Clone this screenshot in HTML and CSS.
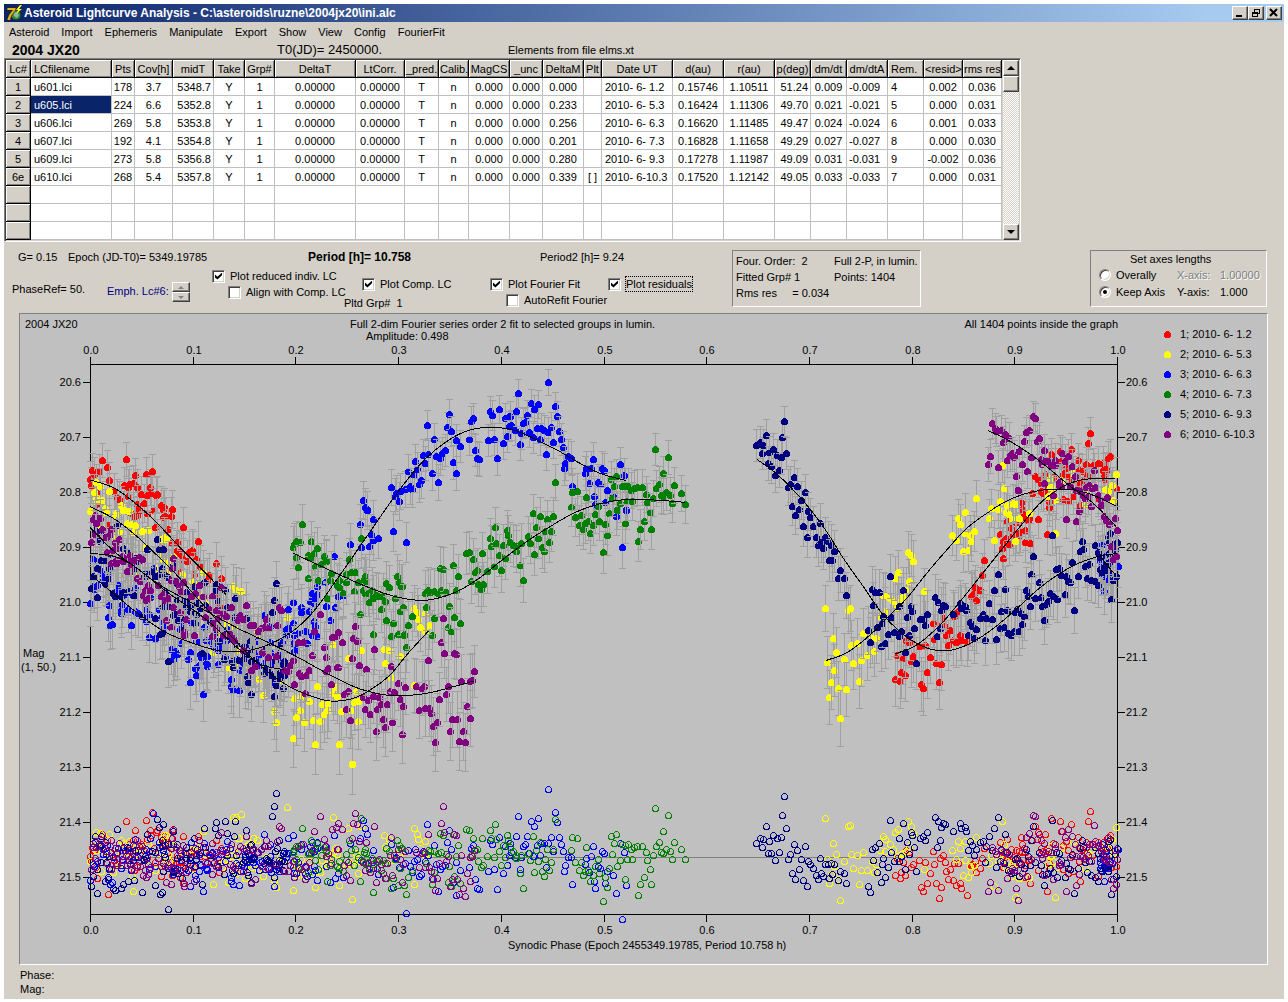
FILE: index.html
```html
<!DOCTYPE html>
<html lang="en">
<head>
    <meta charset="UTF-8">
    <meta name="viewport" content="width=device-width, initial-scale=1.0">
    <title>Asteroid Lightcurve Analysis</title>
    <link rel="stylesheet" href="styles.css">
</head>
<body>

    <div class="window">
        <!-- Title bar -->
        <header class="title-bar">
            <svg class="app-icon" width="17" height="17" viewBox="0 0 17 17">
                <circle cx="10" cy="10" r="5" fill="#2f8f3c" stroke="#222" />
                <path d="M8 8l3-1 2 3-2 3-3-2z" fill="#8fb8a0" />
                <path d="M14 0l-4 5h2l-2 4 6-5h-3l3-4z" fill="#ffff00" />
                <text x="0" y="15" class="icon-seven">7</text>
            </svg>
            <h1>Asteroid Lightcurve Analysis - C:\asteroids\ruzne\2004jx20\ini.alc</h1>
            <div class="window-buttons">
                <button aria-label="Minimize"><svg width="12" height="10"><path d="M2 8h6" stroke="#000" stroke-width="2" /></svg></button>
                <button aria-label="Restore"><svg width="12" height="10" shape-rendering="crispEdges"><path d="M4 1h6M4 1.5h6M4.5 1v3M9.500 1v5M7 5.500h3M2 4.500h6M2 5.500h6M2.500 4v5M7.500 4v5M2 8.500h6" stroke="#000" fill="none" /></svg></button>
                <button aria-label="Close" class="close"><svg width="12" height="10"><path d="M2 1l7 7M9 1l-7 7" stroke="#000" stroke-width="2" /></svg></button>
            </div>
        </header>

        <nav class="menu">
            <a href="#">Asteroid</a>
            <a href="#">Import</a>
            <a href="#">Ephemeris</a>
            <a href="#">Manipulate</a>
            <a href="#">Export</a>
            <a href="#">Show</a>
            <a href="#">View</a>
            <a href="#">Config</a>
            <a href="#">FourierFit</a>
        </nav>

        <div class="info-row">
            <strong class="object-name">2004 JX20</strong>
            <span class="t0">T0(JD)= 2450000.</span>
            <span>Elements from file elms.xt</span>
        </div>

        <!-- Lightcurve table -->
        <div class="grid-box">
            <table id="lcTable">
                <colgroup id="lcCols"></colgroup>
                <thead><tr id="lcHead"></tr></thead>
                <tbody id="lcBody"></tbody>
            </table>
            <div class="scrollbar">
                <button aria-label="Scroll up"><svg width="8" height="4"><path d="M0 4l4-4 4 4z" /></svg></button>
                <div class="thumb"></div>
                <button aria-label="Scroll down" class="down"><svg width="8" height="4"><path d="M0 0h8l-4 4z" /></svg></button>
            </div>
        </div>

        <!-- Plot controls -->
        <div class="controls">
            <div class="control-main">
                <div class="values">
                    <span class="g-value">G= 0.15</span>
                    <span class="epoch">Epoch (JD-T0)= 5349.19785</span>
                    <strong class="period">Period [h]= 10.758</strong>
                    <span>Period2 [h]= 9.24</span>
                </div>
                <div class="options">
                    <span class="phase-ref">PhaseRef= 50.</span>
                    <div class="emph">
                        <span>Emph. Lc#6:</span>
                        <div class="spinner">
                            <button aria-label="Next"><svg width="6" height="3"><path d="M0 3l3-3 3 3z" /></svg></button>
                            <button aria-label="Previous"><svg width="6" height="3"><path d="M0 0h6l-3 3z" /></svg></button>
                        </div>
                    </div>
                    <div class="option-col reduced">
                        <label><input type="checkbox" checked> <span>Plot reduced indiv. LC</span></label>
                        <label class="sub"><input type="checkbox"> <span>Align with Comp. LC</span></label>
                    </div>
                    <div class="option-col comp">
                        <label><input type="checkbox" checked> <span>Plot Comp. LC</span></label>
                        <span class="pltd">Pltd Grp#&nbsp; 1</span>
                    </div>
                    <div class="option-col fourier">
                        <label><input type="checkbox" checked> <span>Plot Fourier Fit</span></label>
                        <label class="sub"><input type="checkbox"> <span>AutoRefit Fourier</span></label>
                    </div>
                    <div class="option-col residuals">
                        <label><input type="checkbox" checked> <span class="focused">Plot residuals</span></label>
                    </div>
                </div>
            </div>

            <div class="panel fit-panel">
                <span>Four. Order:&nbsp; 2</span><span>Full 2-P, in lumin.</span>
                <span>Fitted Grp# 1</span><span>Points: 1404</span>
                <span>Rms res &nbsp; &nbsp; = 0.034</span>
            </div>

            <div class="panel axes-panel">
                <p>Set axes lengths</p>
                <label><input type="radio" name="axes"> Overally</label>
                <span class="disabled">X-axis:</span><span class="disabled">1.00000</span>
                <label><input type="radio" name="axes" checked> Keep Axis</label>
                <span>Y-axis:</span><span>1.000</span>
            </div>
        </div>

        <!-- Chart -->
        <div class="chart">
            <svg id="chart" viewBox="20 314 1247 650"></svg>
        </div>

        <footer class="status">
            <div>Phase:</div>
            <div>Mag:</div>
        </footer>
    </div>

    <script src="script.js"></script>
</body>
</html>
```
FILE: styles.css
```css
* {
    box-sizing: border-box;
}

body {
    margin: 0;
    padding: 4px 4px 0;
    background: #fff;
    color: #000;
    font-family: "Liberation Sans", Arial, sans-serif;
    font-size: 11px;
    line-height: 14px;
}

p, h1 {
    margin: 0;
}

button {
    display: flex;
    align-items: center;
    justify-content: center;
    margin: 0;
    padding: 0;
    background: #d4d0c8;
    border: 1px solid;
    border-color: #fff #404040 #404040 #fff;
    box-shadow: inset -1px -1px #808080;
}

.window {
    background: #d4d0c8;
    border-bottom: 1px solid #fff;
    box-shadow: 0 3px #d4d0c8;
}

/* Title bar */
.title-bar {
    display: flex;
    align-items: center;
    height: 18px;
    padding: 0 2px;
    background: linear-gradient(to right, #0a246a, #a6caf0 94%);
}

.icon-seven {
    font: italic bold 16px "Liberation Sans", sans-serif;
    fill: #e0b020;
    stroke: #302000;
    stroke-width: 1px;
    paint-order: stroke;
}

.title-bar h1 {
    margin-left: 1px;
    color: #fff;
    font: bold 12px "Liberation Sans", Arial, sans-serif;
    white-space: nowrap;
}

.window-buttons {
    display: flex;
    margin-left: auto;
}

.window-buttons button {
    width: 16px;
    height: 14px;
}

.window-buttons .close {
    margin-left: 2px;
}

.menu {
    display: flex;
    gap: 12px;
    height: 20px;
    padding: 3px 5px;
}

.menu a {
    color: #000;
    text-decoration: none;
}

.info-row {
    display: flex;
    align-items: center;
    height: 16px;
    padding-left: 8px;
}

.object-name {
    width: 265px;
    font-size: 14px;
}

.t0 {
    width: 231px;
    font-size: 13px;
}

/* Lightcurve table */
.grid-box {
    display: flex;
    width: 1017px;
    border: 1px solid;
    border-color: #808080 #fff #fff #808080;
    box-shadow: inset 1px 1px #404040;
    padding: 1px;
    background: #d4d0c8;
}

table {
    width: 996px;
    table-layout: fixed;
    border-collapse: separate;
    border-spacing: 0;
    background: #fff;
}

th, td {
    height: 18px;
    padding: 1px 1px 0;
    line-height: 15px;
    font-weight: normal;
    text-align: center;
    white-space: nowrap;
    overflow: hidden;
}

td {
    border-right: 1px solid #c0c0c0;
    border-bottom: 1px solid #c0c0c0;
}

th {
    background: #d4d0c8;
    border-right: 1px solid #000;
    border-bottom: 1px solid #000;
    box-shadow: inset 1px 1px #fff, inset -1px -1px #808080;
}

.left {
    padding-left: 3px;
    text-align: left;
}

.right {
    padding-right: 2px;
    text-align: right;
}

.tight {
    padding-left: 2px;
}

.selected {
    background: #0a246a;
    color: #fff;
}

.scrollbar {
    display: flex;
    flex-direction: column;
    width: 16px;
    margin-left: 1px;
    background: repeating-conic-gradient(#fff 0 25%, #d4d0c8 0 50%) 0 0 / 2px 2px;
}

.scrollbar button {
    height: 16px;
}

.thumb {
    height: 16px;
    background: #d4d0c8;
    border: 1px solid;
    border-color: #fff #404040 #404040 #fff;
    box-shadow: inset -1px -1px #808080;
}

.scrollbar .down {
    margin-top: auto;
}

/* Plot controls */
.controls {
    display: flex;
    height: 71px;
    padding: 8px 17px 0 8px;
}

.control-main {
    width: 720px;
}

.values {
    display: flex;
    padding-left: 6px;
}

.g-value {
    width: 50px;
}

.epoch {
    width: 240px;
}

.period {
    width: 232px;
    font-size: 12px;
}

.options {
    display: flex;
    white-space: nowrap;
}

.phase-ref {
    width: 95px;
    padding-top: 18px;
}

.emph {
    display: flex;
    width: 105px;
    padding-top: 18px;
    color: #000080;
}

.emph > span {
    width: 65px;
    padding-top: 2px;
}

.spinner {
    width: 18px;
}

.spinner button {
    width: 100%;
    height: 10px;
    fill: #808080;
}

.option-col label {
    display: flex;
    align-items: center;
    gap: 5px;
    height: 16px;
}

.option-col .sub {
    margin-left: 16px;
}

.reduced {
    width: 150px;
    padding-top: 4px;
}

.comp, .fourier, .residuals {
    padding-top: 12px;
}

.comp {
    width: 128px;
}

.pltd {
    display: block;
    margin: 4px 0 0 -18px;
}

.fourier {
    width: 118px;
}

.focused {
    outline: 1px dotted #000;
}

input {
    appearance: none;
    flex: none;
    width: 13px;
    height: 13px;
    margin: 0;
    background: #fff;
    border: 1px solid;
    border-color: #808080 #fff #fff #808080;
    box-shadow: inset 1px 1px #404040, inset -1px -1px #d4d0c8;
}

input[type="checkbox"]:checked::after {
    content: "";
    display: block;
    width: 7px;
    height: 7px;
    margin: 2px;
    background: #000;
    clip-path: polygon(0 30%, 35% 62%, 100% 0, 100% 40%, 35% 100%, 0 70%);
}

input[type="radio"] {
    width: 12px;
    height: 12px;
    border-radius: 50%;
}

input[type="radio"]:checked::after {
    content: "";
    display: block;
    width: 4px;
    height: 4px;
    margin: 3px;
    border-radius: 50%;
    background: #000;
}

.panel {
    border: 1px solid;
    border-color: #808080 #fff #fff #808080;
    height: 57px;
}

.fit-panel {
    display: grid;
    grid-template-columns: 98px auto;
    grid-auto-rows: 16px;
    width: 189px;
    padding: 3px;
    white-space: nowrap;
}

.axes-panel {
    display: grid;
    grid-template-columns: 78px 43px auto;
    grid-template-rows: 15px 17px 17px;
    align-items: center;
    width: 177px;
    margin-left: auto;
    padding-left: 8px;
    white-space: nowrap;
}

.axes-panel p {
    grid-column: 1 / 4;
    padding-left: 31px;
}

.axes-panel label {
    display: flex;
    align-items: center;
    gap: 5px;
}

.disabled {
    color: #808080;
    text-shadow: 1px 1px #fff;
}

/* Chart */
.chart {
    margin: 0 16px 0 15px;
    background: #c0c0c0;
    border: 1px solid;
    border-color: #808080 #fff #fff #808080;
}

.chart svg {
    display: block;
    width: 100%;
}

.chart text {
    font-family: "Liberation Sans", Arial, sans-serif;
    font-size: 11px;
}

.middle {
    text-anchor: middle;
}

.end {
    text-anchor: end;
}

.axis, .fit {
    fill: none;
    stroke: #000;
}

.zero-line {
    stroke: #808080;
}

.error-bar {
    fill: none;
    stroke: #a0a0a0;
}

.open-dot {
    fill: none;
}

.status {
    height: 34px;
    padding: 3px 16px;
}
```
FILE: script.js
```js
// ---- Lightcurve table ----
const columns = [
    ['Lc#', 25], ['LCfilename', 81, 'left'], ['Pts', 23], ['Cov[h]', 38], ['midT', 41, 'right'],
    ['Take', 31], ['Grp#', 30], ['DeltaT', 81], ['LtCorr.', 49], ['_pred.', 34], ['Calib.', 30],
    ['MagCS', 41], ['_unc', 33], ['DeltaM', 41], ['Plt', 18], ['Date UT', 71, 'left'],
    ['d(au)', 51], ['r(au)', 51], ['p(deg)', 36, 'right'], ['dm/dt', 36], ['dm/dtA', 41, 'left tight'],
    ['Rem.', 36, 'left'], ['<resid>', 39], ['rms res', 39]
];

const rows = [
    '1|u601.lci|178|3.7|5348.7|Y|1|0.00000|0.00000|T|n|0.000|0.000|0.000||2010- 6- 1.2|0.15746|1.10511|51.24|0.009|-0.009|4|0.002|0.036',
    '2|u605.lci|224|6.6|5352.8|Y|1|0.00000|0.00000|T|n|0.000|0.000|0.233||2010- 6- 5.3|0.16424|1.11306|49.70|0.021|-0.021|5|0.000|0.031',
    '3|u606.lci|269|5.8|5353.8|Y|1|0.00000|0.00000|T|n|0.000|0.000|0.256||2010- 6- 6.3|0.16620|1.11485|49.47|0.024|-0.024|6|0.001|0.033',
    '4|u607.lci|192|4.1|5354.8|Y|1|0.00000|0.00000|T|n|0.000|0.000|0.201||2010- 6- 7.3|0.16828|1.11658|49.29|0.027|-0.027|8|0.000|0.030',
    '5|u609.lci|273|5.8|5356.8|Y|1|0.00000|0.00000|T|n|0.000|0.000|0.280||2010- 6- 9.3|0.17278|1.11987|49.09|0.031|-0.031|9|-0.002|0.036',
    '6e|u610.lci|268|5.4|5357.8|Y|1|0.00000|0.00000|T|n|0.000|0.000|0.339|[ ]|2010- 6-10.3|0.17520|1.12142|49.05|0.033|-0.033|7|0.000|0.031',
    '', '', ''
];

const head = document.getElementById('lcHead');
columns.forEach(function (c, i) {
    const col = document.createElement('col');
    col.style.width = c[1] + 'px';
    document.getElementById('lcCols').appendChild(col);
    const th = document.createElement('th');
    th.textContent = c[0];
    if (i === 1 || i === 21) th.className = 'left';
    head.appendChild(th);
});

rows.forEach(function (row, r) {
    const tr = document.createElement('tr');
    const values = row.split('|');
    columns.forEach(function (c, i) {
        const cell = document.createElement(i === 0 ? 'th' : 'td');
        cell.textContent = values[i] || '';
        if (c[2]) cell.className = c[2];
        if (r === 1 && i === 1) cell.classList.add('selected');
        tr.appendChild(cell);
    });
    document.getElementById('lcBody').appendChild(tr);
});

// ---- Chart ----
const LEFT = 90, RIGHT = 1117, TOP = 364, BOTTOM = 914, ZERO = 857;
const chart = document.getElementById('chart');

function el(name, attrs, text) {
    const node = document.createElementNS('http://www.w3.org/2000/svg', name);
    for (const key in attrs) node.setAttribute(key, attrs[key]);
    if (text) node.textContent = text;
    chart.appendChild(node);
    return node;
}

// sessions: samples are stored at 3 units per pixel, from the origin of each part
const A = [80, 360], B = [400, 360], C = [740, 380];
const sessions = [
    { color: '#ff0000', label: '1; 2010- 6- 1.2', parts: [
        { o: A, fit: '31,360 100,383 160,425 215,473 270,530 320,583 370,632 440,705',
          pts: '68,301 82,323 139,298 218,334 200,343 167,346 43,343 30,358 35,375 48,398 88,362 133,376 148,374 160,371 103,395 113,411 145,410 185,403 203,405 232,402 211,382 228,405 193,430 173,434 244,436 249,448 278,448 256,469 155,460 222,451 178,452 117,418 264,507 310,502 275,551 328,577 297,576 290,573 303,583 321,605 360,620 343,642 389,645 381,660 310,665 85,497',
          extra: [31, 440, 26] },
        { o: C, fit: '466,822 530,795 600,735 660,665 720,590 780,515 840,440 900,370 960,325 1010,303 1060,296 1132,297',
          pts: '1051,160 1045,190 995,207 960,215 933,222 963,243 1015,240 1040,253 1060,257 1090,250 1110,230 1105,235 1097,268 1093,290 1075,250 1130,325 1028,275 1018,270 980,265 985,290 1000,350 928,382 895,418 877,340 885,288 895,297 905,310 920,330 915,283 922,463 871,490 839,466 820,465 800,475 790,485 786,505 781,463 855,450 865,420 855,405 848,412 845,367 803,425 830,428 815,445 733,541 727,586 707,622 720,630 703,640 695,650 710,660 697,645 655,695 643,709 611,715 579,731 600,738 615,738 630,750 620,767 625,795 640,780 650,788 660,765 665,782 683,785 584,778 556,796 538,800 500,780 508,787 472,825 490,835 520,829 514,844 570,831 590,850 605,853 562,877 484,877 497,886 466,898 481,904 543,913 550,925 598,907',
          extra: [790, 1130, 26] }
    ] },
    { color: '#ffff00', label: '2; 2010- 6- 5.3', parts: [
        { o: A, fit: '31,440 100,475 160,520 220,575 290,645 370,735 440,813 500,878 560,932 620,975 680,1003 750,1023 820,1015 870,990 930,945 980,885 1050,808',
          pts: '60,378 88,394 48,412 68,422 76,445 125,437 130,450 106,466 30,454 143,489 154,493 118,515 260,538 240,580 250,598 265,608 307,643 460,680 484,694 470,690 623,772 760,853 845,872 805,895 912,868 927,870 917,910 935,952 400,876 495,964 550,1006 583,1054 589,1087 640,1135 706,1154 778,1154 817,1213 648,1072 674,1087 700,1081 720,1084 660,1051 733,1062 742,1052 727,1034 642,1015 665,1008 688,1023 745,1030 760,1001 772,1008 784,1054 815,1050 835,1084 822,1027 836,1025 828,995 1003,975 1003,745 1012,757 1014,777 1022,802 1035,815 1048,797 1035,760 960,890 712,980 767,982 375,730 440,790 560,930 600,960',
          extra: [31, 640, 46] },
        { o: C, fit: '257,842 320,818 390,765 440,715 500,655 560,580 620,510 680,445 740,400 800,363 860,340 920,329 1000,330 1060,346 1132,380',
          pts: '257,685 331,685 325,692 280,775 263,848 283,871 274,907 268,952 295,925 319,928 301,1015 290,817 313,838 340,850 335,795 352,790 370,760 364,841 382,826 358,904 403,815 397,775 408,775 420,710 435,695 430,645 437,650 450,655 460,665 475,577 467,595 505,517 514,527 520,544 509,604 553,634 500,632 490,650 471,683 485,660 638,466 650,482 655,415 660,433 676,397 709,355 703,454 690,465 693,485 670,515 685,510 675,460 749,415 753,385 788,256 793,325 781,364 803,376 820,370 825,372 798,397 808,402 817,417 838,415 775,388 764,481 827,485 946,460 940,340 950,360 935,322 925,350 930,295 1130,283 1117,316 1035,373 1055,320',
          extra: [860, 1130, 8] }
    ] },
    { color: '#0000ff', label: '3; 2010- 6- 6.3', parts: [
        { o: A, fit: '31,643 100,700 180,765 260,818 340,850 420,872 500,872 570,852 640,812 700,755 780,645 860,530 940,415 1010,325 1060,275 1120,232 1170,210 1230,202 1300,210 1360,235 1440,275 1500,310 1560,340 1640,362',
          pts: '30,730 85,772 92,796 98,793 125,751 208,832 287,874 305,850 275,867 280,897 325,897 358,916 382,918 331,967 370,1003 480,932 583,970 220,626 115,677 112,692 135,703 165,755 175,760 640,727 764,590 690,725 706,714 738,740 766,742 752,781 735,667 640,790 655,820 680,815 713,828 683,850 620,825 775,710 790,705 811,553 844,562 867,558 895,535 880,540 873,523 841,493 880,478 862,451 850,421 855,442 940,514 979,547 934,382 957,423 950,400 945,410 960,395 975,388 997,387 990,378 1003,345 985,334 1006,304 1018,373 1023,362 1012,328 1036,310 1030,286 1046,282 1057,340 1042,196 1064,238 1075,367 1070,288 1080,294 1087,280 1096,271 1108,163 1101,202 1114,214 1120,307 1129,340 1129,240 1141,259 1180,175 1174,183 1168,238 1186,271 1191,295 1198,298 1225,241 1230,154 1237,166 1243,238 1252,295 1258,148 1270,250 1281,229 1276,175 1291,168 1309,154 1315,100 1321,253 1342,166 1354,130 1364,148 1376,133 1372,205 1348,217 1330,190 1336,186 1295,195 1287,200 1305,210 1325,220 1360,232 1381,238 1392,210 1385,206 1413,203 1406,216 1426,139 1432,169 1437,214 1444,238 1449,262 1420,247 1399,283 1405,67 1465,290 1473,295 1457,309 1454,325 1477,379 1516,340 1520,325 1533,325 1540,298 1527,370 1543,409 1555,367 1560,373 1566,324 1572,331 1582,392 1577,427 1600,408 1621,313 1633,346 1640,451 1627,562 1609,468 1547,432',
          extra: [31, 720, 105] },
        { o: C, fit: '1080,528 1105,560 1132,590',
          pts: '1135,560 1080,545 1090,530 1100,550 1085,580 1105,600 1097,590 1110,580',
          extra: [1080, 1132, 8] }
    ] },
    { color: '#008000', label: '4; 2010- 6- 7.3', parts: [
        { o: A, fit: '640,580 780,645 860,680 940,708 1020,721 1080,713 1140,690 1200,653 1260,605 1340,545 1410,500 1480,460 1540,437 1600,423 1660,418 1740,421 1816,427',
          pts: '667,493 640,562 661,547 694,545 712,565 648,592 655,622 684,585 694,592 703,580 733,589 740,600 738,605 685,655 715,660 706,620 725,612 750,660 755,640 778,660 773,675 778,683 808,598 800,643 815,636 825,637 743,715 790,700 835,668 858,665 850,690 855,700 865,700 868,727 878,690 880,715 890,705 895,710 905,747 917,724 928,682 910,710 945,715 952,649 841,763 880,823 920,781 940,790 934,829 955,822 973,823 979,862 960,755 971,742 985,796 997,769 1040,742 1063,775 1057,825 1037,700 1045,692 1052,698 1063,695 1075,700 1085,692 1098,697 1108,739 1123,772 1142,790 1104,802 1114,814 1129,692 1090,628 1081,625 1120,616 1135,649',
          extra: [640, 1000, 12] },
        { o: B, fit: '60,721 120,713 180,690 240,653 300,605 380,545 450,500 520,460 580,437 640,423 700,418 780,421 856,427', hideFit: true,
          pts: '207,577 198,580 220,598 247,580 214,665 226,637 232,631 236,672 243,687 251,674 262,634 283,620 298,586 305,631 316,594 370,661 361,616 403,583 433,575 427,562 447,547 390,550 364,550 349,560 340,555 331,547 309,555 290,550 275,558 270,535 286,502 321,512 326,526 348,573 385,529 415,535 409,502 436,514 455,514 442,478 460,469 421,469 400,461 466,367 516,398 532,394 559,412 515,441 527,472 543,466 538,496 550,507 556,490 565,484 571,520 580,495 598,485 616,493 587,463 595,440 610,577 622,526 628,460 653,451 676,490 660,430 637,415 634,357 649,349 643,379 667,379 675,380 686,378 693,392 703,385 712,383 727,382 697,423 682,425 738,403 743,427 760,415 770,385 778,374 790,340 766,268 805,292 823,376 844,400 856,433 817,430 810,405 800,398 790,410 785,405 751,457 733,485 721,508 754,508 715,544',
          extra: [0, 0, 0] }
    ] },
    { color: '#000080', label: '5; 2010- 6- 9.3', parts: [
        { o: A, fit: '31,580 100,588 160,617 260,695 380,780 480,870 540,912 615,930',
          pts: '232,538 113,495 45,510 60,545 145,575 65,600 80,600 87,625 40,650 35,685 53,712 100,700 105,710 125,710 130,697 145,695 75,670 255,646 225,650 410,672 405,690 436,690 466,715 589,670 583,721 577,757 187,768 226,775 240,823 248,820 265,904 368,880 433,898 460,921 515,905 565,938 573,945 250,740 265,740 280,765 295,780 320,740 330,755 345,790',
          extra: [31, 615, 85] },
        { o: C, fit: '50,238 100,273 150,320 200,375 260,455 310,535 370,620 430,705 490,763 540,795 590,811 640,809 700,785 760,745 820,695 900,623 960,580 1020,548 1080,528 1132,520',
          pts: '49,196 61,188 79,167 70,197 67,220 88,216 100,208 112,226 124,233 139,220 127,172 133,124 85,250 95,258 117,271 106,287 163,292 151,313 145,322 172,320 197,337 184,361 157,379 178,388 166,406 205,394 211,412 190,439 221,439 241,430 202,473 229,471 255,473 235,495 245,488 249,505 265,485 273,497 283,514 268,541 277,541 301,571 295,595 312,595 320,646 397,628 406,637 418,637 451,589 490,631 400,676 478,679 430,708 455,712 428,730 412,742 384,751 391,787 425,800 435,790 445,763 463,757 477,768 484,755 509,766 524,745 497,816 530,850 502,712 513,680 516,695 540,717 550,717 555,735 562,703 586,652 595,667 610,676 615,680 605,692 600,745 592,769 640,703 660,670 665,685 680,690 675,680 775,583 763,631 796,628 748,670 730,703 720,715 740,715 757,718 690,727 697,738 709,748 685,766 702,774 736,781 769,778 780,744 794,742 785,694 802,691 825,697 832,687 845,700 853,709 847,733 838,755 822,753 813,765 805,760 871,679 858,631 865,650 885,655 903,652 897,607 874,583 880,529 937,466 932,640 940,648 952,658 925,665 920,672 908,680 913,721 976,643 957,566 950,568 965,587 980,590 985,605 990,608 997,547 1015,589 1003,691 1027,484 1020,515 1030,507 1065,496 1075,516 1047,553 1035,558 1041,595 1055,600 1065,605 1075,617 1132,487 1115,658 1080,568 1087,578 1095,560 1105,575 1120,600 1130,590',
          extra: [1070, 1132, 8] }
    ] },
    { color: '#800080', label: '6; 2010- 6-10.3', parts: [
        { o: A, fit: '31,503 100,572 160,617 240,675 320,720 400,765 480,808 570,850 650,890 750,945 830,983 900,1002 960,1007 1040,1000 1120,980 1185,962',
          pts: '40,478 45,465 62,475 50,490 34,547 68,507 80,533 90,524 118,537 82,577 100,570 110,566 95,609 110,600 128,590 140,597 130,605 160,602 188,598 143,635 153,612 150,630 172,655 180,665 280,595 235,677 275,662 290,665 310,668 298,680 305,695 358,676 205,677 195,690 210,692 200,720 190,705 205,715 250,702 265,715 245,710 335,708 345,700 370,710 398,709 425,682 280,742 300,758 320,779 312,817 343,826 260,782 377,773 420,750 430,760 454,742 440,769 415,775 400,790 408,805 480,765 490,778 475,780 499,736 430,825 450,822 460,835 465,845 510,796 520,796 535,815 555,800 559,778 565,805 592,796 598,742 603,750 722,763 547,877 490,870 565,892 590,890 515,931 527,920 612,930 625,935 630,915 640,900 643,973 676,1000 655,847 670,847 703,814 733,862 697,886 740,892 757,831 768,828 775,817 787,847 745,925 740,935 754,973 775,922 687,930 665,950 680,945 658,940 825,798 820,835 833,843 883,868 817,895 838,915 860,928 772,922 793,1003 806,995 798,1048 811,1080 850,1012 865,1022 855,1048 871,1063 880,1010 898,1012 903,1032 893,1048 922,1032 910,1078 937,1087 916,1102 889,1114 967,1123 955,970 977,982 930,995 943,998 961,1018 970,1039 1009,980 1033,978 1027,985 1017,1050 1035,1045 1047,1045 1053,1060 1078,1018 1072,1087 1060,1098 1066,1147 1045,901 1093,880 1123,880 1129,883 1083,847 1090,775 1183,934 1145,964 1170,965 1177,960 1105,979 1099,1003 1161,1039 1171,1075 1132,1078 1117,1078 1111,1114 1150,1114 1138,1144 1157,1147 934,918',
          extra: [31, 600, 14] },
        { o: C, fit: '745,152 800,178 870,222 930,268 990,318 1060,370 1132,443',
          pts: '757,130 765,145 768,155 785,150 797,162 790,187 808,175 752,229 745,253 775,262 818,220 812,226 824,231 803,241 838,215 847,253 863,274 829,289 853,184 858,157 868,150 880,109 886,115 892,184 898,175 874,232 903,238 915,245 925,245 933,255 945,240 947,255 967,220 985,229 975,245 997,259 836,331 913,310 958,307 965,320 940,345 990,318 980,418 1009,424 1018,394 1030,345 1040,322 1010,330 1020,335 1035,355 1045,350 1057,325 1065,322 1055,379 1075,345 1085,360 1103,352 1085,375 1093,410 1100,420 1107,433 1127,415 1132,451 1114,499 1121,538 1063,272',
          extra: [900, 1130, 6] }
    ] }
];

let seed = 2004;
function random() {
    seed = (seed * 16807) % 2147483647;
    return seed / 2147483647;
}

function noise() {
    return (random() + random() + random() + random() - 2) * 29;
}

function parse(list, origin) {
    return list.split(' ').map(function (pair) {
        const p = pair.split(',');
        return [origin[0] + p[0] / 3, origin[1] + p[1] / 3];
    });
}

// smooth curve through the knots
function curveAt(knots, x) {
    let i = 0;
    while (i < knots.length - 2 && x > knots[i + 1][0]) i++;
    const slope = function (k) {
        const a = knots[Math.max(k - 1, 0)], b = knots[Math.min(k + 1, knots.length - 1)];
        return (b[1] - a[1]) / (b[0] - a[0]);
    };
    const p = knots[i], q = knots[i + 1], h = q[0] - p[0];
    const t = Math.min(Math.max((x - p[0]) / h, 0), 1), t2 = t * t, t3 = t2 * t;
    return (2 * t3 - 3 * t2 + 1) * p[1] + (t3 - 2 * t2 + t) * h * slope(i)
        + (3 * t2 - 2 * t3) * q[1] + (t3 - t2) * h * slope(i + 1);
}

// relative flux for a height on the magnitude axis (550 units per mag)
function flux(y) {
    return Math.pow(10, -0.4 * (y - 460) / 550);
}

// axes
el('path', { class: 'zero-line', d: `M${LEFT} ${ZERO}.5H${RIGHT}` });
let axes = `M${LEFT}.5 ${TOP}.5H${RIGHT}.5V${BOTTOM}.5H${LEFT}.5Z`;
for (let i = 0; i <= 10; i++) {
    const x = Math.round(LEFT + i * 102.7);
    axes += `M${x}.5 ${TOP}v-7M${x}.5 ${BOTTOM}v8`;
    el('text', { x: x + 1, y: 354, class: 'middle' }, (i / 10).toFixed(1));
    el('text', { x: x + 1, y: 934, class: 'middle' }, (i / 10).toFixed(1));
}
for (let i = 0; i < 10; i++) {
    const y = 382 + i * 55;
    axes += `M${LEFT} ${y}.5h-7M${RIGHT} ${y}.5h8`;
    el('text', { x: 81, y: y + 4, class: 'end' }, (20.6 + i / 10).toFixed(1));
    el('text', { x: 1126, y: y + 4 }, (20.6 + i / 10).toFixed(1));
}
el('path', { class: 'axis', 'shape-rendering': 'crispEdges', d: axes });

// samples with error bars, then their residuals in flux
const residuals = [];
sessions.forEach(function (s) {
    s.parts.forEach(function (part) {
        const knots = part.knots = parse(part.fit, part.o);
        const pts = parse(part.pts, part.o);
        for (let i = 0; i < part.extra[2]; i++) {
            const x = part.o[0] + (part.extra[0] + random() * (part.extra[1] - part.extra[0])) / 3;
            pts.push([x, curveAt(knots, x) + noise()]);
        }
        pts.sort(function (a, b) { return a[0] - b[0]; });
        pts.forEach(function (p) {
            const x = Math.floor(p[0]) + 0.5, y = Math.floor(p[1]) + 0.5;
            const e = Math.round(14 + (y - 400) * 0.045);
            el('path', { class: 'error-bar', 'shape-rendering': 'crispEdges',
                d: `M${x} ${y - e}v${2 * e}M${x - 3.5} ${y - e}h7M${x - 3.5} ${y + e}h7` });
            el('circle', { cx: x, cy: y, r: 3.5, fill: s.color, 'shape-rendering': 'crispEdges' });
            const diff = (flux(curveAt(knots, p[0])) - flux(p[1])) * 597;
            residuals.push([x, Math.round(ZERO + diff) + 0.5, s.color]);
        });
    });
});
residuals.forEach(function (r) {
    el('circle', { class: 'open-dot', cx: r[0], cy: r[1], r: 3, stroke: r[2], 'shape-rendering': 'crispEdges' });
});

// Fourier fit curves
sessions.forEach(function (s) {
    s.parts.forEach(function (part) {
        if (part.hideFit) return;
        const end = part.knots[part.knots.length - 1][0];
        let d = '';
        for (let x = part.knots[0][0]; x <= end; x += 2) {
            d += (d ? 'L' : 'M') + x.toFixed(1) + ' ' + curveAt(part.knots, x).toFixed(1);
        }
        el('path', { class: 'fit', 'shape-rendering': 'crispEdges', d: d });
    });
});

// captions and legend
el('text', { x: 25, y: 328 }, '2004 JX20');
el('text', { x: 350, y: 328 }, 'Full 2-dim Fourier series order 2 fit to selected groups in lumin.');
el('text', { x: 366, y: 340 }, 'Amplitude: 0.498');
el('text', { x: 1118, y: 328, class: 'end' }, 'All 1404 points inside the graph');
el('text', { x: 508, y: 949 }, 'Synodic Phase (Epoch 2455349.19785, Period 10.758 h)');
el('text', { x: 23, y: 657 }, 'Mag');
el('text', { x: 21, y: 671 }, '(1, 50.)');
sessions.forEach(function (s, i) {
    const y = 334 + i * 20;
    el('circle', { cx: 1167.5, cy: y + 0.5, r: 3.5, fill: s.color, 'shape-rendering': 'crispEdges' });
    el('text', { x: 1180, y: y + 4 }, s.label);
});
```
